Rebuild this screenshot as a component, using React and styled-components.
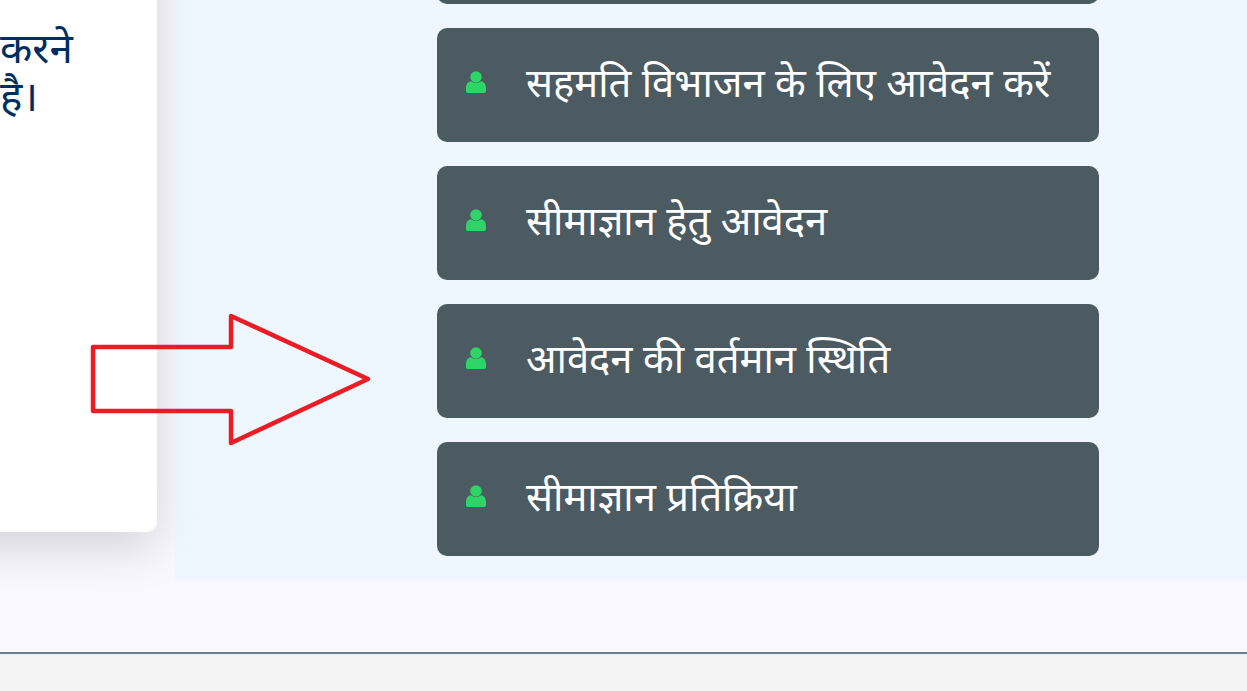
import React from 'react';
import styled, { createGlobalStyle } from 'styled-components';

const Global = createGlobalStyle`
  html, body { margin: 0; padding: 0; width: 1247px; height: 691px; overflow: hidden; background: #f8f8fe; }
  #root { width: 1247px; height: 691px; }
`;

const FONT = `"Noto Sans", "Liberation Sans", "DejaVu Sans", "Noto Sans CJK SC", sans-serif`;

const Page = styled.div`
  position: relative;
  width: 1247px;
  height: 691px;
  overflow: hidden;
  display: flex;
  flex-direction: column;
  background: #f8f8fe;
  font-family: ${FONT};
`;

const Main = styled.main`
  flex: none;
  height: 652px;
  overflow: hidden;
`;

const Columns = styled.div`
  display: flex;
  align-items: flex-start;
  gap: 18px;
  margin-top: -134px;
  margin-left: -300px;
`;

const Card = styled.section`
  flex: none;
  box-sizing: border-box;
  width: 457px;
  height: 666px;
  padding: 157px 0 0 300px;
  background: #fff;
  border-radius: 10px;
  box-shadow: 0 16px 48px rgba(0, 0, 0, 0.15);
  color: #002f5f;
  font-size: 42px;
  line-height: 48px;
`;

const Panel = styled.section`
  flex: none;
  box-sizing: border-box;
  width: 1072px;
  padding: 24px 0 24px 262px;
  background: rgba(225, 245, 254, 0.4);
  display: flex;
  flex-direction: column;
  gap: 24px;
`;

const ActionButton = styled.a`
  box-sizing: border-box;
  width: 662px;
  height: 114px;
  padding: 0 0 7px 30px;
  display: flex;
  align-items: center;
  gap: 40px;
  background: #4c5a62;
  border-radius: 10px;
  color: #fff;
  font-size: 40px;
  white-space: nowrap;
`;

const PersonIcon = styled.svg`
  flex: none;
  width: 20px;
  height: 23px;
  margin: 2px 0 0 -1px;
  fill: #2dd566;
`;

const Arrow = styled.svg`
  position: absolute;
  left: 0;
  top: 0;
  width: 1247px;
  height: 691px;
  pointer-events: none;
`;

const Footer = styled.footer`
  flex: 1;
  border-top: 2px solid #6e7d8c;
  background: #f3f3f3;
`;

const items = [
  '',
  'सहमति विभाजन के लिए आवेदन करें',
  'सीमाज्ञान हेतु आवेदन',
  'आवेदन की वर्तमान स्थिति',
  'सीमाज्ञान प्रतिक्रिया',
];

export default function App() {
  return (
    <Page>
      <Global />
      <Main>
        <Columns>
          <Card>
            करने
            <br />
            है।
          </Card>
          <Panel>
            {items.map((t, i) => (
              <ActionButton key={i}>
                {t && (
                  <PersonIcon viewBox="0 0 20 23">
                    <circle cx="10" cy="6" r="5.800" />
                    <path d="M5 10.200C6.300 11.300 8 12 10 12s3.700-.7 5-1.800c3 .2 5 3 5 6.800v3c0 1.400-.9 2-2.500 2h-15C.9 22 0 21.400 0 20v-3c0-3.800 2-6.600 5-6.800z" />
                  </PersonIcon>
                )}
                {t}
              </ActionButton>
            ))}
          </Panel>
        </Columns>
      </Main>
      <Footer />
      <Arrow viewBox="0 0 1247 691">
        <path
          d="M93 347H231V316L368 379L231 443V411H93Z"
          fill="none"
          stroke="#ed1c24"
          strokeWidth="4.500"
          strokeLinejoin="round"
        />
      </Arrow>
    </Page>
  );
}
